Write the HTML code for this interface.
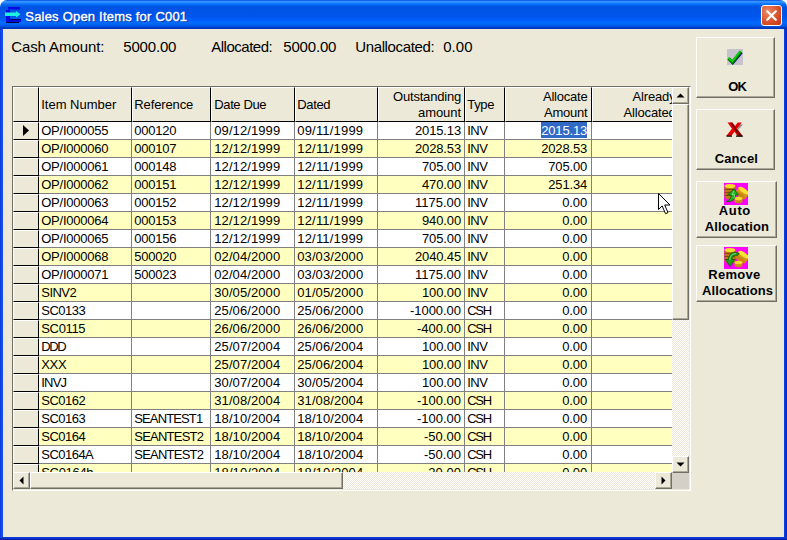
<!DOCTYPE html><html><head><meta charset="utf-8"><title>Sales Open Items</title><style>
*{box-sizing:border-box;margin:0;padding:0}
html,body{width:787px;height:540px;overflow:hidden;background:#ece9d8}
body{font-family:"Liberation Sans",sans-serif;position:relative;color:#000}
.a,.t{position:absolute}
.t{white-space:nowrap}
#title{left:0;top:0;width:787px;height:29px;background:linear-gradient(to bottom,#0048dc 0%,#3593ff 5%,#2d8eff 8%,#127dff 12%,#036ffc 15%,#0262ee 18%,#0057e5 22%,#0054e3 26%,#0055eb 56%,#005bf5 66%,#026afe 78%,#0062ef 86%,#0052e0 91%,#0040c8 95%,#0030b8 100%);border-radius:7px 7px 0 0}
#bl{left:0;top:29px;width:3px;height:511px;background:linear-gradient(to right,#0a30d8,#1658f0 60%,#0a44e4)}
#br{left:784px;top:29px;width:3px;height:511px;background:linear-gradient(to right,#0a44e4,#0a38d8 50%,#0420a8)}
#bb{left:0;top:537px;width:787px;height:3px;background:linear-gradient(to bottom,#0a40e0,#0a30c8 50%,#0418a0)}
.btn{position:absolute;background:#ece9d8;border:1px solid;border-color:#fff #716f64 #716f64 #fff;box-shadow:inset -1px -1px 0 #aca899}
.sb{position:absolute;background:#ece9d8;border:1px solid;border-color:#fff #716f64 #716f64 #fff;box-shadow:inset -1px -1px 0 #aca899}
.dith{position:absolute;background:repeating-conic-gradient(#fff 0 25%,#ece9d8 0 50%) 0 0/2px 2px}
.hc{position:absolute;top:87px;height:35px;background:#ece9d8;border:1px solid;border-color:#fff #000 #000 #fff}
.rw{position:absolute;left:39px;width:633px;height:18px;border-bottom:1px solid #808080}
.vl{position:absolute;top:122px;width:1px;height:350px;background:#808080}
</style></head><body>
<div class="a" style="left:0;top:0;width:8px;height:8px;background:#fff"></div><div class="a" style="left:779px;top:0;width:8px;height:8px;background:#fff"></div>
<div id="title" class="a"></div><div id="bl" class="a"></div><div id="br" class="a"></div><div id="bb" class="a"></div>
<svg class="a" style="left:5px;top:7px" width="17" height="16" viewBox="0 0 17 16"><path d="M3 0h12v2.500H3z" fill="#0808e0"/><path d="M1 3h4v10H1z" fill="#0808e0"/><path d="M1 12h15v3H1z" fill="#0808e0"/><path d="M5 12h11v1H5z" fill="#000060"/><path d="M1 15h13v1H1z" fill="#000030"/><path d="M0 5.5h11V4l4.5 3.3L11 10.5V9H0z" fill="#20f0e0"/></svg>
<div class="t" style="left:25.25px;top:10px;font-size:13px;line-height:13px;color:#fff;letter-spacing:0.21px;text-shadow:1px 1px 0 #0a2a9a;-webkit-text-stroke:0.4px #fff">Sales Open Items for C001</div>
<div class="a" style="left:761px;top:5px;width:21px;height:21px;border:1px solid #fff;border-radius:3px;background:radial-gradient(circle at 30% 30%,#ea8a68 0%,#de5a34 45%,#c2330f 100%)"><svg class="a" style="left:0;top:0" width="19" height="19" viewBox="0 0 19 19"><path d="M5.2 5.2l8.6 8.6M13.8 5.2l-8.6 8.6" stroke="#fff" stroke-width="2.2" stroke-linecap="round"/></svg></div>
<div class="t" style="left:11.25px;top:39px;font-size:15px;line-height:15px;color:#000;letter-spacing:-0.1px;">Cash Amount:</div>
<div class="t" style="left:123.25px;top:39px;font-size:15px;line-height:15px;color:#000;letter-spacing:-0.18px;">5000.00</div>
<div class="t" style="left:211.25px;top:39px;font-size:15px;line-height:15px;color:#000;letter-spacing:-0.49px;">Allocated:</div>
<div class="t" style="left:283.25px;top:39px;font-size:15px;line-height:15px;color:#000;letter-spacing:-0.18px;">5000.00</div>
<div class="t" style="left:355.25px;top:39px;font-size:15px;line-height:15px;color:#000;letter-spacing:-0.37px;">Unallocated:</div>
<div class="t" style="left:443.25px;top:39px;font-size:15px;line-height:15px;color:#000;letter-spacing:0.02px;">0.00</div>
<div class="a" style="left:12px;top:86px;width:679px;height:405px;border:1px solid;border-color:#716f64 #fff #fff #716f64;background:#ece9d8"></div>
<div class="a" style="left:0;top:0;width:672px;height:472px;overflow:hidden">
<div class="hc" style="left:13px;width:26px"></div>
<div class="hc" style="left:39px;width:93px"></div>
<div class="hc" style="left:132px;width:79px"></div>
<div class="hc" style="left:211px;width:84px"></div>
<div class="hc" style="left:295px;width:83px"></div>
<div class="hc" style="left:378px;width:87px"></div>
<div class="hc" style="left:465px;width:40px"></div>
<div class="hc" style="left:505px;width:87px"></div>
<div class="hc" style="left:592px;width:109px"></div>
<div class="rw" style="top:122px;background:#fff"></div>
<div class="a" style="left:13px;top:122px;width:26px;height:18px;background:#ece9d8;border:1px solid;border-color:#fff #000 #000 #fff"></div>
<div class="rw" style="top:140px;background:#ffffc0"></div>
<div class="a" style="left:13px;top:140px;width:26px;height:18px;background:#ece9d8;border:1px solid;border-color:#fff #000 #000 #fff"></div>
<div class="rw" style="top:158px;background:#fff"></div>
<div class="a" style="left:13px;top:158px;width:26px;height:18px;background:#ece9d8;border:1px solid;border-color:#fff #000 #000 #fff"></div>
<div class="rw" style="top:176px;background:#ffffc0"></div>
<div class="a" style="left:13px;top:176px;width:26px;height:18px;background:#ece9d8;border:1px solid;border-color:#fff #000 #000 #fff"></div>
<div class="rw" style="top:194px;background:#fff"></div>
<div class="a" style="left:13px;top:194px;width:26px;height:18px;background:#ece9d8;border:1px solid;border-color:#fff #000 #000 #fff"></div>
<div class="rw" style="top:212px;background:#ffffc0"></div>
<div class="a" style="left:13px;top:212px;width:26px;height:18px;background:#ece9d8;border:1px solid;border-color:#fff #000 #000 #fff"></div>
<div class="rw" style="top:230px;background:#fff"></div>
<div class="a" style="left:13px;top:230px;width:26px;height:18px;background:#ece9d8;border:1px solid;border-color:#fff #000 #000 #fff"></div>
<div class="rw" style="top:248px;background:#ffffc0"></div>
<div class="a" style="left:13px;top:248px;width:26px;height:18px;background:#ece9d8;border:1px solid;border-color:#fff #000 #000 #fff"></div>
<div class="rw" style="top:266px;background:#fff"></div>
<div class="a" style="left:13px;top:266px;width:26px;height:18px;background:#ece9d8;border:1px solid;border-color:#fff #000 #000 #fff"></div>
<div class="rw" style="top:284px;background:#ffffc0"></div>
<div class="a" style="left:13px;top:284px;width:26px;height:18px;background:#ece9d8;border:1px solid;border-color:#fff #000 #000 #fff"></div>
<div class="rw" style="top:302px;background:#fff"></div>
<div class="a" style="left:13px;top:302px;width:26px;height:18px;background:#ece9d8;border:1px solid;border-color:#fff #000 #000 #fff"></div>
<div class="rw" style="top:320px;background:#ffffc0"></div>
<div class="a" style="left:13px;top:320px;width:26px;height:18px;background:#ece9d8;border:1px solid;border-color:#fff #000 #000 #fff"></div>
<div class="rw" style="top:338px;background:#fff"></div>
<div class="a" style="left:13px;top:338px;width:26px;height:18px;background:#ece9d8;border:1px solid;border-color:#fff #000 #000 #fff"></div>
<div class="rw" style="top:356px;background:#ffffc0"></div>
<div class="a" style="left:13px;top:356px;width:26px;height:18px;background:#ece9d8;border:1px solid;border-color:#fff #000 #000 #fff"></div>
<div class="rw" style="top:374px;background:#fff"></div>
<div class="a" style="left:13px;top:374px;width:26px;height:18px;background:#ece9d8;border:1px solid;border-color:#fff #000 #000 #fff"></div>
<div class="rw" style="top:392px;background:#ffffc0"></div>
<div class="a" style="left:13px;top:392px;width:26px;height:18px;background:#ece9d8;border:1px solid;border-color:#fff #000 #000 #fff"></div>
<div class="rw" style="top:410px;background:#fff"></div>
<div class="a" style="left:13px;top:410px;width:26px;height:18px;background:#ece9d8;border:1px solid;border-color:#fff #000 #000 #fff"></div>
<div class="rw" style="top:428px;background:#ffffc0"></div>
<div class="a" style="left:13px;top:428px;width:26px;height:18px;background:#ece9d8;border:1px solid;border-color:#fff #000 #000 #fff"></div>
<div class="rw" style="top:446px;background:#fff"></div>
<div class="a" style="left:13px;top:446px;width:26px;height:18px;background:#ece9d8;border:1px solid;border-color:#fff #000 #000 #fff"></div>
<div class="rw" style="top:464px;background:#ffffc0"></div>
<div class="a" style="left:13px;top:464px;width:26px;height:18px;background:#ece9d8;border:1px solid;border-color:#fff #000 #000 #fff"></div>
<div class="vl" style="left:131px"></div>
<div class="vl" style="left:210px"></div>
<div class="vl" style="left:294px"></div>
<div class="vl" style="left:377px"></div>
<div class="vl" style="left:464px"></div>
<div class="vl" style="left:504px"></div>
<div class="vl" style="left:591px"></div>
<div class="a" style="left:541px;top:122px;width:46px;height:15.5px;background:#316ac5"></div>
<div class="t" style="left:41.25px;top:98px;font-size:13px;line-height:13px;color:#000;letter-spacing:-0.01px;">Item Number</div>
<div class="t" style="left:134.25px;top:98px;font-size:13px;line-height:13px;color:#000;letter-spacing:-0.11px;">Reference</div>
<div class="t" style="left:214.25px;top:98px;font-size:13px;line-height:13px;color:#000;letter-spacing:-0.37px;">Date Due</div>
<div class="t" style="left:297.25px;top:98px;font-size:13px;line-height:13px;color:#000;letter-spacing:-0.34px;">Dated</div>
<div class="t" style="left:393px;top:90px;font-size:13px;line-height:13px;color:#000;letter-spacing:-0.19px;">Outstanding</div>
<div class="t" style="left:418px;top:106px;font-size:13px;line-height:13px;color:#000;letter-spacing:-0.06px;">amount</div>
<div class="t" style="left:467.25px;top:98px;font-size:13px;line-height:13px;color:#000;letter-spacing:-0.3px;">Type</div>
<div class="t" style="left:543px;top:90px;font-size:13px;line-height:13px;color:#000;letter-spacing:-0.22px;">Allocate</div>
<div class="t" style="left:544px;top:106px;font-size:13px;line-height:13px;color:#000;letter-spacing:-0.22px;">Amount</div>
<div class="t" style="left:632.5px;top:90px;font-size:13px;line-height:13px;color:#000;letter-spacing:-0.15px;">Already</div>
<div class="t" style="left:623.5px;top:106px;font-size:13px;line-height:13px;color:#000;letter-spacing:-0.16px;">Allocated</div>
<div class="t" style="left:41.25px;top:124px;font-size:13px;line-height:13px;color:#000;letter-spacing:-0.24px;">OP/I000055</div>
<div class="t" style="left:134.25px;top:124px;font-size:13px;line-height:13px;color:#000;letter-spacing:-0.23px;">000120</div>
<div class="t" style="left:214.25px;top:124px;font-size:13px;line-height:13px;color:#000;letter-spacing:0.09px;">09/12/1999</div>
<div class="t" style="left:297.25px;top:124px;font-size:13px;line-height:13px;color:#000;letter-spacing:0.19px;">09/11/1999</div>
<div class="t" style="left:415px;top:124px;font-size:13px;line-height:13px;color:#000;letter-spacing:-0.14px;">2015.13</div>
<div class="t" style="left:467.25px;top:124px;font-size:13px;line-height:13px;color:#000;letter-spacing:-0.56px;">INV</div>
<div class="t" style="left:541.2px;top:124px;font-size:13px;line-height:13px;color:#fff;letter-spacing:-0.14px;">2015.13</div>
<div class="t" style="left:41.25px;top:142px;font-size:13px;line-height:13px;color:#000;letter-spacing:-0.24px;">OP/I000060</div>
<div class="t" style="left:134.25px;top:142px;font-size:13px;line-height:13px;color:#000;letter-spacing:-0.23px;">000107</div>
<div class="t" style="left:214.25px;top:142px;font-size:13px;line-height:13px;color:#000;letter-spacing:0.09px;">12/12/1999</div>
<div class="t" style="left:297.25px;top:142px;font-size:13px;line-height:13px;color:#000;letter-spacing:0.19px;">12/11/1999</div>
<div class="t" style="left:415px;top:142px;font-size:13px;line-height:13px;color:#000;letter-spacing:-0.14px;">2028.53</div>
<div class="t" style="left:467.25px;top:142px;font-size:13px;line-height:13px;color:#000;letter-spacing:-0.56px;">INV</div>
<div class="t" style="left:541.2px;top:142px;font-size:13px;line-height:13px;color:#000;letter-spacing:-0.14px;">2028.53</div>
<div class="t" style="left:41.25px;top:160px;font-size:13px;line-height:13px;color:#000;letter-spacing:-0.24px;">OP/I000061</div>
<div class="t" style="left:134.25px;top:160px;font-size:13px;line-height:13px;color:#000;letter-spacing:-0.23px;">000148</div>
<div class="t" style="left:214.25px;top:160px;font-size:13px;line-height:13px;color:#000;letter-spacing:0.09px;">12/12/1999</div>
<div class="t" style="left:297.25px;top:160px;font-size:13px;line-height:13px;color:#000;letter-spacing:0.19px;">12/11/1999</div>
<div class="t" style="left:422px;top:160px;font-size:13px;line-height:13px;color:#000;letter-spacing:-0.13px;">705.00</div>
<div class="t" style="left:467.25px;top:160px;font-size:13px;line-height:13px;color:#000;letter-spacing:-0.56px;">INV</div>
<div class="t" style="left:548.2px;top:160px;font-size:13px;line-height:13px;color:#000;letter-spacing:-0.13px;">705.00</div>
<div class="t" style="left:41.25px;top:178px;font-size:13px;line-height:13px;color:#000;letter-spacing:-0.24px;">OP/I000062</div>
<div class="t" style="left:134.25px;top:178px;font-size:13px;line-height:13px;color:#000;letter-spacing:-0.23px;">000151</div>
<div class="t" style="left:214.25px;top:178px;font-size:13px;line-height:13px;color:#000;letter-spacing:0.09px;">12/12/1999</div>
<div class="t" style="left:297.25px;top:178px;font-size:13px;line-height:13px;color:#000;letter-spacing:0.19px;">12/11/1999</div>
<div class="t" style="left:422px;top:178px;font-size:13px;line-height:13px;color:#000;letter-spacing:-0.13px;">470.00</div>
<div class="t" style="left:467.25px;top:178px;font-size:13px;line-height:13px;color:#000;letter-spacing:-0.56px;">INV</div>
<div class="t" style="left:548.2px;top:178px;font-size:13px;line-height:13px;color:#000;letter-spacing:-0.13px;">251.34</div>
<div class="t" style="left:41.25px;top:196px;font-size:13px;line-height:13px;color:#000;letter-spacing:-0.24px;">OP/I000063</div>
<div class="t" style="left:134.25px;top:196px;font-size:13px;line-height:13px;color:#000;letter-spacing:-0.23px;">000152</div>
<div class="t" style="left:214.25px;top:196px;font-size:13px;line-height:13px;color:#000;letter-spacing:0.09px;">12/12/1999</div>
<div class="t" style="left:297.25px;top:196px;font-size:13px;line-height:13px;color:#000;letter-spacing:0.19px;">12/11/1999</div>
<div class="t" style="left:415px;top:196px;font-size:13px;line-height:13px;color:#000;letter-spacing:-0px;">1175.00</div>
<div class="t" style="left:467.25px;top:196px;font-size:13px;line-height:13px;color:#000;letter-spacing:-0.56px;">INV</div>
<div class="t" style="left:562.2px;top:196px;font-size:13px;line-height:13px;color:#000;letter-spacing:-0.08px;">0.00</div>
<div class="t" style="left:41.25px;top:214px;font-size:13px;line-height:13px;color:#000;letter-spacing:-0.24px;">OP/I000064</div>
<div class="t" style="left:134.25px;top:214px;font-size:13px;line-height:13px;color:#000;letter-spacing:-0.23px;">000153</div>
<div class="t" style="left:214.25px;top:214px;font-size:13px;line-height:13px;color:#000;letter-spacing:0.09px;">12/12/1999</div>
<div class="t" style="left:297.25px;top:214px;font-size:13px;line-height:13px;color:#000;letter-spacing:0.19px;">12/11/1999</div>
<div class="t" style="left:422px;top:214px;font-size:13px;line-height:13px;color:#000;letter-spacing:-0.13px;">940.00</div>
<div class="t" style="left:467.25px;top:214px;font-size:13px;line-height:13px;color:#000;letter-spacing:-0.56px;">INV</div>
<div class="t" style="left:562.2px;top:214px;font-size:13px;line-height:13px;color:#000;letter-spacing:-0.08px;">0.00</div>
<div class="t" style="left:41.25px;top:232px;font-size:13px;line-height:13px;color:#000;letter-spacing:-0.24px;">OP/I000065</div>
<div class="t" style="left:134.25px;top:232px;font-size:13px;line-height:13px;color:#000;letter-spacing:-0.23px;">000156</div>
<div class="t" style="left:214.25px;top:232px;font-size:13px;line-height:13px;color:#000;letter-spacing:0.09px;">12/12/1999</div>
<div class="t" style="left:297.25px;top:232px;font-size:13px;line-height:13px;color:#000;letter-spacing:0.19px;">12/11/1999</div>
<div class="t" style="left:422px;top:232px;font-size:13px;line-height:13px;color:#000;letter-spacing:-0.13px;">705.00</div>
<div class="t" style="left:467.25px;top:232px;font-size:13px;line-height:13px;color:#000;letter-spacing:-0.56px;">INV</div>
<div class="t" style="left:562.2px;top:232px;font-size:13px;line-height:13px;color:#000;letter-spacing:-0.08px;">0.00</div>
<div class="t" style="left:41.25px;top:250px;font-size:13px;line-height:13px;color:#000;letter-spacing:-0.24px;">OP/I000068</div>
<div class="t" style="left:134.25px;top:250px;font-size:13px;line-height:13px;color:#000;letter-spacing:-0.23px;">500020</div>
<div class="t" style="left:214.25px;top:250px;font-size:13px;line-height:13px;color:#000;letter-spacing:0.09px;">02/04/2000</div>
<div class="t" style="left:297.25px;top:250px;font-size:13px;line-height:13px;color:#000;letter-spacing:0.09px;">03/03/2000</div>
<div class="t" style="left:415px;top:250px;font-size:13px;line-height:13px;color:#000;letter-spacing:-0.14px;">2040.45</div>
<div class="t" style="left:467.25px;top:250px;font-size:13px;line-height:13px;color:#000;letter-spacing:-0.56px;">INV</div>
<div class="t" style="left:562.2px;top:250px;font-size:13px;line-height:13px;color:#000;letter-spacing:-0.08px;">0.00</div>
<div class="t" style="left:41.25px;top:268px;font-size:13px;line-height:13px;color:#000;letter-spacing:-0.24px;">OP/I000071</div>
<div class="t" style="left:134.25px;top:268px;font-size:13px;line-height:13px;color:#000;letter-spacing:-0.23px;">500023</div>
<div class="t" style="left:214.25px;top:268px;font-size:13px;line-height:13px;color:#000;letter-spacing:0.09px;">02/04/2000</div>
<div class="t" style="left:297.25px;top:268px;font-size:13px;line-height:13px;color:#000;letter-spacing:0.09px;">03/03/2000</div>
<div class="t" style="left:415px;top:268px;font-size:13px;line-height:13px;color:#000;letter-spacing:-0px;">1175.00</div>
<div class="t" style="left:467.25px;top:268px;font-size:13px;line-height:13px;color:#000;letter-spacing:-0.56px;">INV</div>
<div class="t" style="left:562.2px;top:268px;font-size:13px;line-height:13px;color:#000;letter-spacing:-0.08px;">0.00</div>
<div class="t" style="left:41.25px;top:286px;font-size:13px;line-height:13px;color:#000;letter-spacing:-0.52px;">SINV2</div>
<div class="t" style="left:214.25px;top:286px;font-size:13px;line-height:13px;color:#000;letter-spacing:0.09px;">30/05/2000</div>
<div class="t" style="left:297.25px;top:286px;font-size:13px;line-height:13px;color:#000;letter-spacing:0.09px;">01/05/2000</div>
<div class="t" style="left:422px;top:286px;font-size:13px;line-height:13px;color:#000;letter-spacing:-0.13px;">100.00</div>
<div class="t" style="left:467.25px;top:286px;font-size:13px;line-height:13px;color:#000;letter-spacing:-0.56px;">INV</div>
<div class="t" style="left:562.2px;top:286px;font-size:13px;line-height:13px;color:#000;letter-spacing:-0.08px;">0.00</div>
<div class="t" style="left:41.25px;top:304px;font-size:13px;line-height:13px;color:#000;letter-spacing:-0.5px;">SC0133</div>
<div class="t" style="left:214.25px;top:304px;font-size:13px;line-height:13px;color:#000;letter-spacing:0.09px;">25/06/2000</div>
<div class="t" style="left:297.25px;top:304px;font-size:13px;line-height:13px;color:#000;letter-spacing:0.09px;">25/06/2000</div>
<div class="t" style="left:410px;top:304px;font-size:13px;line-height:13px;color:#000;letter-spacing:-0.04px;">-1000.00</div>
<div class="t" style="left:467.25px;top:304px;font-size:13px;line-height:13px;color:#000;letter-spacing:-1.32px;">CSH</div>
<div class="t" style="left:562.2px;top:304px;font-size:13px;line-height:13px;color:#000;letter-spacing:-0.08px;">0.00</div>
<div class="t" style="left:41.25px;top:322px;font-size:13px;line-height:13px;color:#000;letter-spacing:-0.34px;">SC0115</div>
<div class="t" style="left:214.25px;top:322px;font-size:13px;line-height:13px;color:#000;letter-spacing:0.09px;">26/06/2000</div>
<div class="t" style="left:297.25px;top:322px;font-size:13px;line-height:13px;color:#000;letter-spacing:0.09px;">26/06/2000</div>
<div class="t" style="left:417px;top:322px;font-size:13px;line-height:13px;color:#000;letter-spacing:-0.01px;">-400.00</div>
<div class="t" style="left:467.25px;top:322px;font-size:13px;line-height:13px;color:#000;letter-spacing:-1.32px;">CSH</div>
<div class="t" style="left:562.2px;top:322px;font-size:13px;line-height:13px;color:#000;letter-spacing:-0.08px;">0.00</div>
<div class="t" style="left:41.25px;top:340px;font-size:13px;line-height:13px;color:#000;letter-spacing:-1.39px;">DDD</div>
<div class="t" style="left:214.25px;top:340px;font-size:13px;line-height:13px;color:#000;letter-spacing:0.09px;">25/07/2004</div>
<div class="t" style="left:297.25px;top:340px;font-size:13px;line-height:13px;color:#000;letter-spacing:0.09px;">25/06/2004</div>
<div class="t" style="left:422px;top:340px;font-size:13px;line-height:13px;color:#000;letter-spacing:-0.13px;">100.00</div>
<div class="t" style="left:467.25px;top:340px;font-size:13px;line-height:13px;color:#000;letter-spacing:-0.56px;">INV</div>
<div class="t" style="left:562.2px;top:340px;font-size:13px;line-height:13px;color:#000;letter-spacing:-0.08px;">0.00</div>
<div class="t" style="left:41.25px;top:358px;font-size:13px;line-height:13px;color:#000;letter-spacing:-0.34px;">XXX</div>
<div class="t" style="left:214.25px;top:358px;font-size:13px;line-height:13px;color:#000;letter-spacing:0.09px;">25/07/2004</div>
<div class="t" style="left:297.25px;top:358px;font-size:13px;line-height:13px;color:#000;letter-spacing:0.09px;">25/06/2004</div>
<div class="t" style="left:422px;top:358px;font-size:13px;line-height:13px;color:#000;letter-spacing:-0.13px;">100.00</div>
<div class="t" style="left:467.25px;top:358px;font-size:13px;line-height:13px;color:#000;letter-spacing:-0.56px;">INV</div>
<div class="t" style="left:562.2px;top:358px;font-size:13px;line-height:13px;color:#000;letter-spacing:-0.08px;">0.00</div>
<div class="t" style="left:41.25px;top:376px;font-size:13px;line-height:13px;color:#000;letter-spacing:-0.79px;">INVJ</div>
<div class="t" style="left:214.25px;top:376px;font-size:13px;line-height:13px;color:#000;letter-spacing:0.09px;">30/07/2004</div>
<div class="t" style="left:297.25px;top:376px;font-size:13px;line-height:13px;color:#000;letter-spacing:0.09px;">30/05/2004</div>
<div class="t" style="left:422px;top:376px;font-size:13px;line-height:13px;color:#000;letter-spacing:-0.13px;">100.00</div>
<div class="t" style="left:467.25px;top:376px;font-size:13px;line-height:13px;color:#000;letter-spacing:-0.56px;">INV</div>
<div class="t" style="left:562.2px;top:376px;font-size:13px;line-height:13px;color:#000;letter-spacing:-0.08px;">0.00</div>
<div class="t" style="left:41.25px;top:394px;font-size:13px;line-height:13px;color:#000;letter-spacing:-0.5px;">SC0162</div>
<div class="t" style="left:214.25px;top:394px;font-size:13px;line-height:13px;color:#000;letter-spacing:0.09px;">31/08/2004</div>
<div class="t" style="left:297.25px;top:394px;font-size:13px;line-height:13px;color:#000;letter-spacing:0.09px;">31/08/2004</div>
<div class="t" style="left:417px;top:394px;font-size:13px;line-height:13px;color:#000;letter-spacing:-0.01px;">-100.00</div>
<div class="t" style="left:467.25px;top:394px;font-size:13px;line-height:13px;color:#000;letter-spacing:-1.32px;">CSH</div>
<div class="t" style="left:562.2px;top:394px;font-size:13px;line-height:13px;color:#000;letter-spacing:-0.08px;">0.00</div>
<div class="t" style="left:41.25px;top:412px;font-size:13px;line-height:13px;color:#000;letter-spacing:-0.5px;">SC0163</div>
<div class="t" style="left:134.25px;top:412px;font-size:13px;line-height:13px;color:#000;letter-spacing:-0.87px;">SEANTEST1</div>
<div class="t" style="left:214.25px;top:412px;font-size:13px;line-height:13px;color:#000;letter-spacing:0.09px;">18/10/2004</div>
<div class="t" style="left:297.25px;top:412px;font-size:13px;line-height:13px;color:#000;letter-spacing:0.09px;">18/10/2004</div>
<div class="t" style="left:417px;top:412px;font-size:13px;line-height:13px;color:#000;letter-spacing:-0.01px;">-100.00</div>
<div class="t" style="left:467.25px;top:412px;font-size:13px;line-height:13px;color:#000;letter-spacing:-1.32px;">CSH</div>
<div class="t" style="left:562.2px;top:412px;font-size:13px;line-height:13px;color:#000;letter-spacing:-0.08px;">0.00</div>
<div class="t" style="left:41.25px;top:430px;font-size:13px;line-height:13px;color:#000;letter-spacing:-0.5px;">SC0164</div>
<div class="t" style="left:134.25px;top:430px;font-size:13px;line-height:13px;color:#000;letter-spacing:-0.76px;">SEANTEST2</div>
<div class="t" style="left:214.25px;top:430px;font-size:13px;line-height:13px;color:#000;letter-spacing:0.09px;">18/10/2004</div>
<div class="t" style="left:297.25px;top:430px;font-size:13px;line-height:13px;color:#000;letter-spacing:0.09px;">18/10/2004</div>
<div class="t" style="left:424px;top:430px;font-size:13px;line-height:13px;color:#000;letter-spacing:0.02px;">-50.00</div>
<div class="t" style="left:467.25px;top:430px;font-size:13px;line-height:13px;color:#000;letter-spacing:-1.32px;">CSH</div>
<div class="t" style="left:562.2px;top:430px;font-size:13px;line-height:13px;color:#000;letter-spacing:-0.08px;">0.00</div>
<div class="t" style="left:41.25px;top:448px;font-size:13px;line-height:13px;color:#000;letter-spacing:-0.52px;">SC0164A</div>
<div class="t" style="left:134.25px;top:448px;font-size:13px;line-height:13px;color:#000;letter-spacing:-0.76px;">SEANTEST2</div>
<div class="t" style="left:214.25px;top:448px;font-size:13px;line-height:13px;color:#000;letter-spacing:0.09px;">18/10/2004</div>
<div class="t" style="left:297.25px;top:448px;font-size:13px;line-height:13px;color:#000;letter-spacing:0.09px;">18/10/2004</div>
<div class="t" style="left:424px;top:448px;font-size:13px;line-height:13px;color:#000;letter-spacing:0.02px;">-50.00</div>
<div class="t" style="left:467.25px;top:448px;font-size:13px;line-height:13px;color:#000;letter-spacing:-1.32px;">CSH</div>
<div class="t" style="left:562.2px;top:448px;font-size:13px;line-height:13px;color:#000;letter-spacing:-0.08px;">0.00</div>
<div class="t" style="left:41.25px;top:466px;font-size:13px;line-height:13px;color:#000;letter-spacing:-0.32px;">SC0164b</div>
<div class="t" style="left:214.25px;top:466px;font-size:13px;line-height:13px;color:#000;letter-spacing:0.09px;">18/10/2004</div>
<div class="t" style="left:297.25px;top:466px;font-size:13px;line-height:13px;color:#000;letter-spacing:0.09px;">18/10/2004</div>
<div class="t" style="left:424px;top:466px;font-size:13px;line-height:13px;color:#000;letter-spacing:0.02px;">-20.00</div>
<div class="t" style="left:467.25px;top:466px;font-size:13px;line-height:13px;color:#000;letter-spacing:-1.32px;">CSH</div>
<div class="t" style="left:562.2px;top:466px;font-size:13px;line-height:13px;color:#000;letter-spacing:-0.08px;">0.00</div>
<svg class="a" style="left:23px;top:125px" width="6" height="11" viewBox="0 0 6 11"><path d="M0 0l6 5.5L0 11z" fill="#000"/></svg>
</div>
<div class="dith" style="left:672px;top:87px;width:17px;height:385px"></div>
<div class="dith" style="left:13px;top:472px;width:659px;height:17px"></div>
<div class="a" style="left:672px;top:472px;width:17px;height:17px;background:#d4d0c8"></div>
<div class="sb" style="left:672px;top:87px;width:17px;height:17px"><svg class="a" style="left:0;top:0" width="15" height="15" viewBox="0 0 15 15"><path d="M3.5 9.5l4-4 4 4z" fill="#000"/></svg></div>
<div class="sb" style="left:672px;top:104px;width:17px;height:216px"></div>
<div class="sb" style="left:672px;top:456px;width:17px;height:17px"><svg class="a" style="left:0;top:0" width="15" height="15" viewBox="0 0 15 15"><path d="M3.5 5.5l4 4 4-4z" fill="#000"/></svg></div>
<div class="sb" style="left:13px;top:472px;width:17px;height:17px"><svg class="a" style="left:0;top:0" width="15" height="15" viewBox="0 0 15 15"><path d="M9.5 3.5l-4 4 4 4z" fill="#000"/></svg></div>
<div class="sb" style="left:30px;top:472px;width:313px;height:17px"></div>
<div class="sb" style="left:655px;top:472px;width:17px;height:17px"><svg class="a" style="left:0;top:0" width="15" height="15" viewBox="0 0 15 15"><path d="M5.5 3.5l4 4-4 4z" fill="#000"/></svg></div>
<div class="btn" style="left:696px;top:37px;width:79px;height:61px"></div>
<div class="btn" style="left:696px;top:109px;width:79px;height:61px"></div>
<div class="btn" style="left:696px;top:181px;width:81px;height:57px"></div>
<div class="btn" style="left:696px;top:245px;width:81px;height:57px"></div>
<svg class="a" style="left:726px;top:48px" width="19" height="19" viewBox="0 0 19 19"><rect x="1" y="1" width="16" height="16" fill="#c6c3cc"/><path d="M3.2 11.200l3.600 3.800L15.600 4.300" stroke="#000080" stroke-width="2.600" fill="none"/><path d="M2.400 10.400l3.900 3.800L14.900 3.500" stroke="#008000" stroke-width="3" fill="none"/><path d="M2.200 9.700l4.100 3.800L14.400 3" stroke="#00e000" stroke-width="1.300" fill="none"/></svg>
<div class="t" style="left:728.25px;top:80px;font-size:13px;line-height:13px;font-weight:bold;color:#000;letter-spacing:-0.95px;">OK</div>
<svg class="a" style="left:725px;top:121px" width="20" height="17" viewBox="0 0 20 17"><path d="M14.500 3.500l3.500 0-5 5.500 5.500 7h-4l-3.500-5z" fill="#8c8c8c"/><path d="M2.500 1.500h5l2.600 3.600 2.600-3.600h4l-4.600 6.200 5.400 7.300h-5l-3-4.200-3.300 4.200h-5l5.800-7.300z" fill="#e80000"/><path d="M7 1.500l5.800 8 4.700 5.500h-3.500l-4.600-6.500-4.400-7z" fill="#500000" opacity=".7"/><path d="M1.500 15.200h5.500M11 15.200h6.500" stroke="#100000" stroke-width="1.200"/></svg>
<div class="t" style="left:714.75px;top:152px;font-size:13px;line-height:13px;font-weight:bold;color:#000;letter-spacing:0.09px;">Cancel</div>
<svg class="a" style="left:724px;top:183px" width="24" height="22" viewBox="0 0 24 22"><rect width="24" height="22" fill="#ff00ff"/><path d="M0.5 3v11c0 1.5 2.5 2.5 5.5 2.5s5.5-1 5.5-2.5V3z" fill="#b87810"/><path d="M0.5 6.5h11M0.5 9.500h11M0.5 12.500h11" stroke="#7a4a04" stroke-width=".9"/><ellipse cx="6" cy="3" rx="5.5" ry="2" fill="#f4dc28"/><g transform="rotate(35 18 10)"><rect x="12" y="7" width="12" height="6" fill="#d89818"/><ellipse cx="18" cy="13" rx="6" ry="2.2" fill="#c88410"/><ellipse cx="18" cy="7" rx="6" ry="2.2" fill="#f8e430"/></g><path d="M10.500 15.500v3c0 1 1.800 1.800 4 1.800s4-.8 4-1.800v-3z" fill="#c88a10"/><ellipse cx="14.500" cy="15.500" rx="4" ry="1.800" fill="#f4dc28"/><path d="M10 6L3.500 12h3.800c0 3-1.500 5-4.800 6.500 5 .5 8.500-1.500 8.700-6.500H14.500z" fill="#20b020" stroke="#0a5a0a" stroke-width=".8"/><path d="M10 8l-2 3.500h2.500l-.5 4" stroke="#80e880" stroke-width=".9" fill="none"/></svg>
<div class="t" style="left:718.85px;top:204px;font-size:13px;line-height:13px;font-weight:bold;color:#000;letter-spacing:0.62px;">Auto</div>
<div class="t" style="left:704.75px;top:220px;font-size:13px;line-height:13px;font-weight:bold;color:#000;letter-spacing:0.15px;">Allocation</div>
<svg class="a" style="left:724px;top:247px" width="24" height="22" viewBox="0 0 24 22"><rect width="24" height="22" fill="#ff00ff"/><path d="M0.5 3v11c0 1.5 2.5 2.5 5.5 2.5s5.5-1 5.5-2.5V3z" fill="#b87810"/><path d="M0.5 6.5h11M0.5 9.500h11M0.5 12.500h11" stroke="#7a4a04" stroke-width=".9"/><ellipse cx="6" cy="3" rx="5.5" ry="2" fill="#f4dc28"/><g transform="rotate(35 18 10)"><rect x="12" y="7" width="12" height="6" fill="#d89818"/><ellipse cx="18" cy="13" rx="6" ry="2.2" fill="#c88410"/><ellipse cx="18" cy="7" rx="6" ry="2.2" fill="#f8e430"/></g><path d="M10.500 15.500v3c0 1 1.800 1.800 4 1.800s4-.8 4-1.800v-3z" fill="#c88a10"/><ellipse cx="14.500" cy="15.500" rx="4" ry="1.800" fill="#f4dc28"/><path d="M15 6.500C9 3.500 4.500 7 4.500 12.500H1.500L6 19.500l4.500-7H7.800c0-3 3-5 6-4z" fill="#20a020" stroke="#0a5a0a" stroke-width=".8"/><path d="M12 6.800C8 6.500 6 9 5.800 13" stroke="#80e880" stroke-width=".9" fill="none"/></svg>
<div class="t" style="left:708.25px;top:268px;font-size:13px;line-height:13px;font-weight:bold;color:#000;letter-spacing:0.3px;">Remove</div>
<div class="t" style="left:701.95px;top:284px;font-size:13px;line-height:13px;font-weight:bold;color:#000;letter-spacing:0.11px;">Allocations</div>
<svg class="a" style="left:658px;top:193px" width="13" height="22" viewBox="0 0 13 22"><path d="M0.500 0.500v16l3.700-3.600 3.300 7.800 2.500-1.100-3.300-7.600h5.300z" fill="#fff" stroke="#000" stroke-width="1"/></svg>
</body></html>
